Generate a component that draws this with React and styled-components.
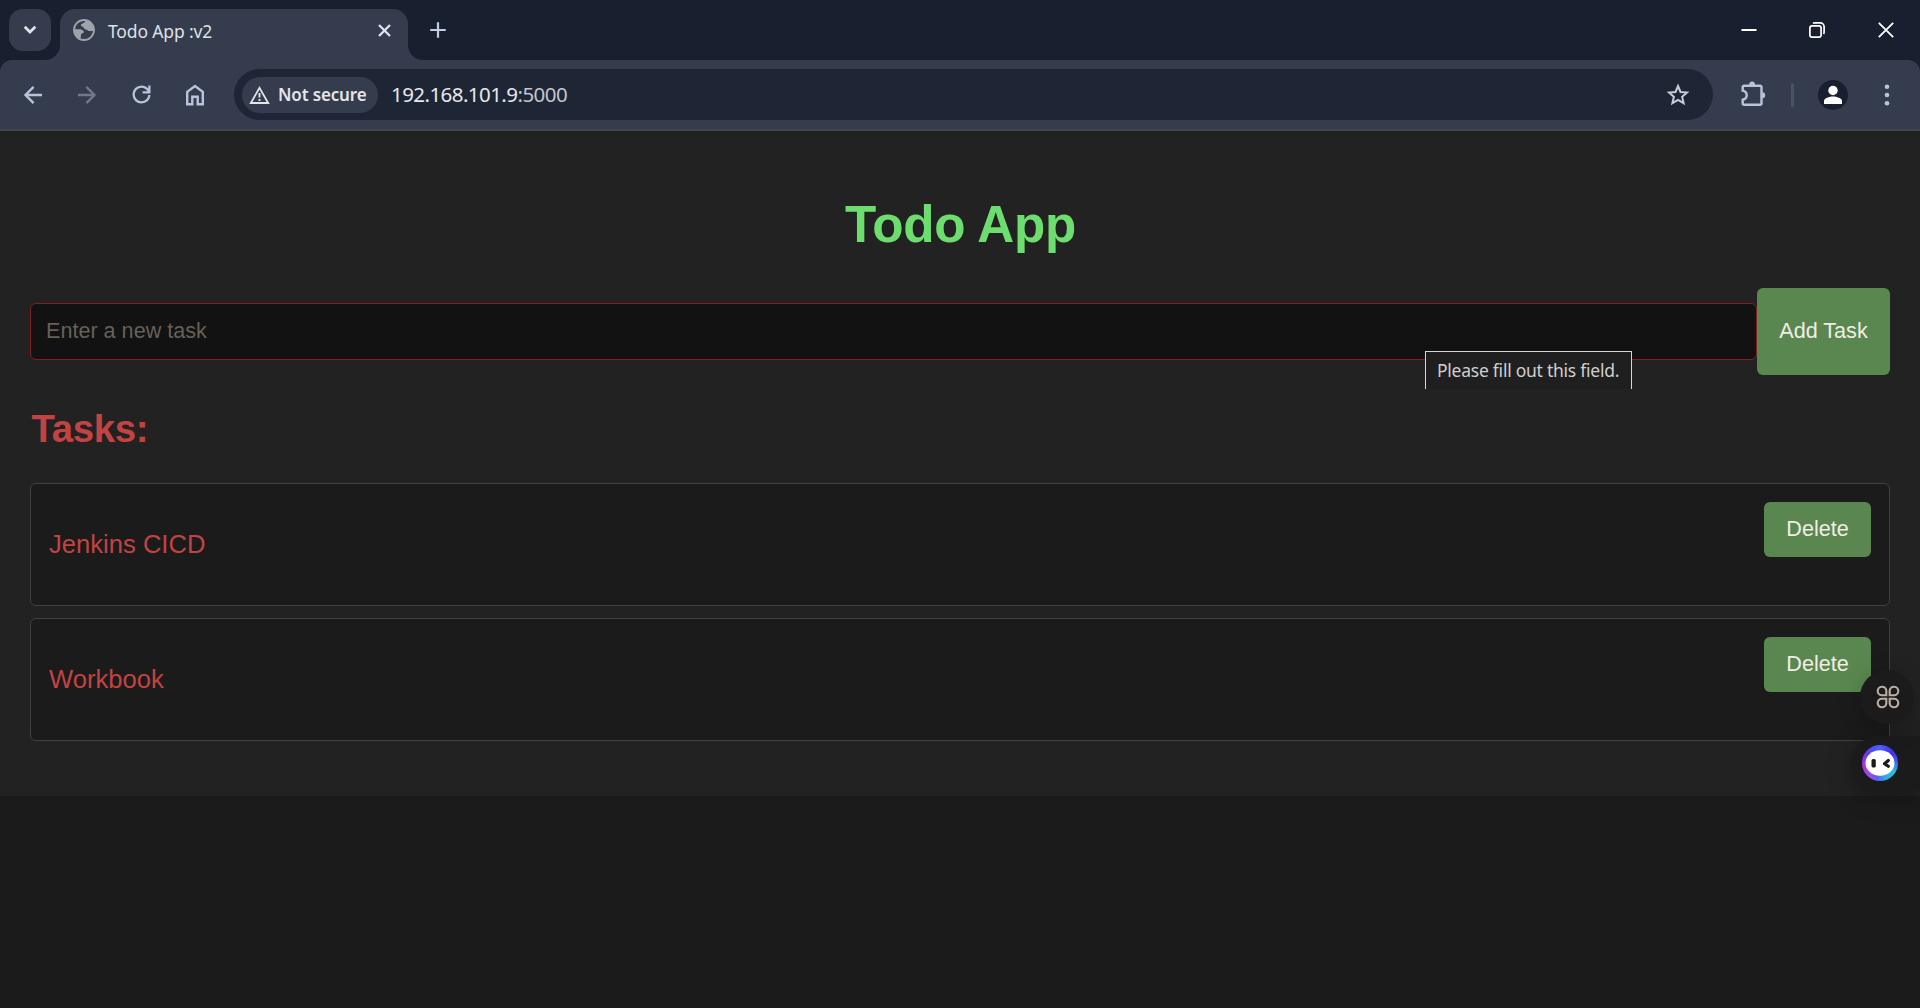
import React from "react";
import styled, { createGlobalStyle } from "styled-components";

const Global = createGlobalStyle`
  * { box-sizing: border-box; }
  html, body { margin: 0; padding: 0; background: #1b1b1b; }
  body { height: 1008px; overflow: hidden; font-family: "Liberation Sans", Arial, sans-serif; }
  svg { display: block; flex: none; }
`;

const ui = `"Noto Sans", "Open Sans", sans-serif`;

const Window = styled.div`
  position: relative;
  width: 1920px;
  height: 1008px;
  display: flex;
  flex-direction: column;
  overflow: hidden;
`;

const TabStrip = styled.header`
  height: 60px;
  flex: none;
  display: flex;
  align-items: flex-start;
  padding: 9px 0 0 9px;
  background: #182030;
`;

const TabSearch = styled.button`
  width: 42px;
  height: 42px;
  padding: 0;
  border: 0;
  border-radius: 14px;
  background: #343c4d;
  display: grid;
  place-items: center;
`;

const Tab = styled.div`
  position: relative;
  width: 348px;
  height: 51px;
  margin-left: 9px;
  padding: 0 17px 9px 13px;
  border-radius: 15px 15px 0 0;
  background: #343c4d;
  display: flex;
  align-items: center;
  &::before, &::after {
    content: "";
    position: absolute;
    bottom: 0;
    width: 15px;
    height: 15px;
  }
  &::before { left: -15px; background: radial-gradient(circle at 0 0, transparent 14.5px, #343c4d 15.5px); }
  &::after { right: -15px; background: radial-gradient(circle at 100% 0, transparent 14.5px, #343c4d 15.5px); }
`;

const TabTitle = styled.span`
  flex: 1;
  margin-left: 13px;
  padding-top: 2px;
  color: #dfe1e6;
  font: 17.5px/24px ${ui};
  letter-spacing: -0.15px;
`;

const NewTab = styled.span`
  margin: 13px 0 0 22px;
`;

const Captions = styled.div`
  margin-left: auto;
  display: flex;
  height: 41px;
  align-items: center;
`;

const Caption = styled.span`
  width: 68.5px;
  display: grid;
  place-items: center;
`;

const ToolbarBack = styled.div`
  flex: none;
  background: #182030;
`;

const Toolbar = styled.nav`
  height: 71px;
  border-bottom: 2px solid #44474f;
  border-radius: 12px 12px 0 0;
  background: #343c4d;
  display: flex;
  align-items: center;
  padding: 0 18px;
`;

const NavIcons = styled.div`
  display: flex;
  gap: 24px;
`;

const Omnibox = styled.div`
  width: 1479px;
  height: 51px;
  margin-left: 24px;
  border-radius: 26px;
  background: #1e2636;
  display: flex;
  align-items: center;
  padding: 0 22px 0 8px;
`;

const SecurityChip = styled.div`
  width: 136px;
  height: 36px;
  border-radius: 18px;
  background: #343c4d;
  display: flex;
  align-items: center;
  padding-left: 7px;
  gap: 8px;
  color: #e3e5ea;
  font: 600 17px/24px ${ui};
  letter-spacing: -0.15px;
  white-space: nowrap;
`;

const Url = styled.span`
  flex: 1;
  margin: -2px 0 0 13px;
  color: #e6e8ed;
  font: 20.5px/28px ${ui};
  letter-spacing: -0.56px;
`;

const Port = styled.span`
  color: #c2c5cd;
`;

const Actions = styled.div`
  display: flex;
  align-items: center;
  padding-left: 25px;
`;

const Divider = styled.span`
  width: 3px;
  height: 24px;
  margin: 0 24px 0 23px;
  border-radius: 2px;
  background: #4a5265;
`;

const Avatar = styled.span`
  width: 30px;
  height: 30px;
  margin-right: 27px;
  border-radius: 50%;
  background: #182030;
  display: grid;
  place-items: center;
`;

const Page = styled.main`
  height: 665px;
  flex: none;
  background: #222222;
  padding: 64px 30px 0;
`;

const Title = styled.h1`
  margin: 0;
  height: 60px;
  padding-left: 1px;
  text-align: center;
  color: #6edd70;
  font-size: 51.2px;
  line-height: 60px;
  letter-spacing: -0.25px;
`;

const TaskForm = styled.form`
  position: relative;
  display: flex;
  align-items: center;
  margin-top: 33px;
  height: 87px;
`;

const TaskInput = styled.input`
  flex: 1;
  height: 57px;
  padding: 0 15px 1px;
  border: 1px solid #831e1e;
  border-radius: 6px;
  background: #121212;
  color: #e8e6e3;
  font: 21.6px "Liberation Sans", Arial, sans-serif;
  outline: none;
  &::placeholder { color: #656158; opacity: 1; }
`;

const Button = styled.button`
  width: ${(p) => (p.$large ? 133 : 107)}px;
  height: ${(p) => (p.$large ? 87 : 55)}px;
  padding: 0 0 1px;
  border: 0;
  border-radius: 6px;
  background: #5a8750;
  color: #f0ede4;
  font: 21.6px "Liberation Sans", Arial, sans-serif;
  white-space: nowrap;
`;

const Hint = styled.div`
  position: absolute;
  left: 1395px;
  top: 63px;
  width: 207px;
  height: 38px;
  padding-left: 11px;
  border: 1px solid #d6d6d6;
  border-bottom: 0;
  background: #1f1f1f;
  color: #cfcfcf;
  font: 17.5px/36px ${ui};
  letter-spacing: -0.25px;
  white-space: nowrap;
`;

const Subtitle = styled.h2`
  margin: 32px 0 0 1.5px;
  height: 44px;
  color: #c24342;
  font-size: 38.4px;
  line-height: 44px;
  letter-spacing: -0.35px;
`;

const TaskList = styled.ul`
  list-style: none;
  margin: 32px 0 0;
  padding: 0;
  display: flex;
  flex-direction: column;
  gap: 12px;
`;

const Task = styled.li`
  height: 123px;
  padding: 18px;
  border: 1px solid #414141;
  border-radius: 6px;
  background: #1b1b1b;
  display: flex;
  justify-content: space-between;
`;

const TaskName = styled.span`
  margin-top: 27px;
  color: #c24342;
  font-size: 25.6px;
  line-height: 30px;
`;

const Shortcuts = styled.div`
  position: absolute;
  left: 1860px;
  top: 670px;
  width: 54px;
  height: 54px;
  padding: 0 0 1px 1px;
  border-radius: 50%;
  background: #1b1b1b;
  box-shadow: 0 6px 24px rgba(0, 0, 0, 0.22);
  display: grid;
  place-items: center;
`;

const Assistant = styled.div`
  position: absolute;
  left: 1851px;
  top: 736px;
  width: 69px;
  height: 54px;
  padding-left: 11px;
  border-radius: 27px 0 0 27px;
  background: #1b1b1b;
  box-shadow: 0 6px 24px rgba(0, 0, 0, 0.35);
  display: flex;
  align-items: center;
`;

const AssistantRing = styled.span`
  width: 36px;
  height: 36px;
  border-radius: 50%;
  background: conic-gradient(#4b63ff, #4a2cf0 50deg, #3f5cf0 85deg, #22c4da 120deg, #30a8e6 160deg, #5a62ee 190deg, #9a48ee 220deg, #a734dc 265deg, #5b3cf0 310deg, #4b63ff);
  display: grid;
  place-items: center;
`;

const ReloadSlot = styled.span`
  width: 30px;
  height: 30px;
  display: grid;
  place-items: center;
`;

const stroke = { fill: "none", stroke: "#bac3dc", strokeWidth: 2.4 };

const Globe = () => (
  <svg width="22" height="22" viewBox="0 0 22 22">
    <circle cx="11" cy="11" r="10" fill="#343c4d" stroke="#9ea4ab" strokeWidth="1.8" />
    <path fill="#9ea4ab" d="M12 1.200c.2 1.300-.3 2.300-1.300 2.800-1.600.7-2.900 1-2.700 2.600.2 1.600 2.200.7 2.600 2 .3 1.200 1.200 1.900 2.300 1.900 1.500 0 1.700 1.600 3.200 1.600h4.700A10 10 0 0 0 12 1.200ZM1.200 10.300h4.600c2.200 0 3.700.4 4.900 2 .8 1.200-.5 2.100-1.700 2.300-1.300.2-.9 1.400-1 2.500-.1 1-.6 1.700-.6 2.900A10 10 0 0 1 1.200 10.300Z" />
  </svg>
);

const tasks = ["Jenkins CICD", "Workbook"];

export default function App() {
  return (
    <>
      <Global />
      <Window>
        <TabStrip>
          <TabSearch aria-label="Search tabs">
            <svg width="14" height="10" viewBox="0 0 14 10"><path d="M1.700 1.700 7 7l5.300-5.300" fill="none" stroke="#e0e3ea" strokeWidth="2.700" /></svg>
          </TabSearch>
          <Tab>
            <Globe />
            <TabTitle>Todo App :v2</TabTitle>
            <svg width="13" height="13" viewBox="0 0 13 13"><path d="m1 1 11 11M12 1 1 12" stroke="#e0e3ea" strokeWidth="2.300" /></svg>
          </Tab>
          <NewTab>
            <svg width="16" height="16" viewBox="0 0 16 16"><path d="M8 .2v15.600M.2 8h15.600" stroke="#c4cce4" strokeWidth="2.200" /></svg>
          </NewTab>
          <Captions>
            <Caption><svg width="16" height="16" viewBox="0 0 16 16"><path d="M.5 8h15" stroke="#fff" strokeWidth="2" /></svg></Caption>
            <Caption>
              <svg width="16" height="16" viewBox="0 0 16 16" fill="none" stroke="#fff" strokeWidth="1.700">
                <rect x=".9" y="3.900" width="11.200" height="11.200" rx="2.200" />
                <path d="M4 1.300C4.500.9 5.200.9 6 .9h5.300a3.800 3.800 0 0 1 3.800 3.800V10c0 .8 0 1.400-.6 2" />
              </svg>
            </Caption>
            <Caption><svg width="16" height="16" viewBox="0 0 16 16"><path d="m.8.8 14.400 14.400M15.200.8.8 15.200" stroke="#fff" strokeWidth="1.800" /></svg></Caption>
          </Captions>
        </TabStrip>
        <ToolbarBack>
          <Toolbar>
            <NavIcons>
              <svg width="30" height="30" viewBox="0 0 30 30" {...stroke}><path d="M24 15H8M15.600 6.900 7.500 15l8.100 8.100" /></svg>
              <svg width="30" height="30" viewBox="0 0 30 30" {...stroke} stroke="#717889"><path d="M6 15h16M14.400 6.900l8.100 8.100-8.100 8.100" /></svg>
              <ReloadSlot>
                <svg width="27" height="27" viewBox="0 0 24 24" fill="#bac3dc"><path d="M12 20q-3.350 0-5.675-2.325T4 12t2.325-5.675T12 4q1.725 0 3.300.713T18 6.750V4h2v7h-7V9h4.200q-.8-1.400-2.187-2.200T12 6Q9.500 6 7.750 7.750T6 12t1.750 4.250T12 18q2.500 0 4.250-1.750T18 12.500h2q0 3.200-2.325 5.350T12 20Z" /></svg>
              </ReloadSlot>
              <svg width="30" height="30" viewBox="0 0 30 30" {...stroke}><path d="M7.200 11.900 15 6l7.800 5.900v12.400h-5.100v-7.500h-5.400v7.500H7.200Z" /></svg>
            </NavIcons>
            <Omnibox>
              <SecurityChip>
                <svg width="21" height="18" viewBox="0 0 21 18"><path d="M10.500 1.900 19.200 17H1.800Z" fill="none" stroke="#e3e5ea" strokeWidth="1.800" /><path d="M10.500 7v4.500M10.500 13v2" stroke="#e3e5ea" strokeWidth="1.900" /></svg>
                Not secure
              </SecurityChip>
              <Url>192.168.101.9<Port>:5000</Port></Url>
              <svg width="26" height="26" viewBox="0 0 26 26"><path d="m13 4 2.500 6 6.500.6-4.900 4.200 1.500 6.300-5.600-3.300-5.600 3.300 1.500-6.300L4 10.600l6.500-.6Z" fill="none" stroke="#c9ccd3" strokeWidth="2" /></svg>
            </Omnibox>
            <Actions>
              <svg width="30" height="30" viewBox="0 0 30 30" {...stroke}>
                <path d="M6.200 5.700H22a1.500 1.500 0 0 1 1.500 1.500v16a1.500 1.500 0 0 1-1.500 1.500H6.200a1.500 1.500 0 0 1-1.500-1.500v-3.500c2.700-.6 4-2.300 4-4.500s-1.300-3.900-4-4.500V7.200a1.500 1.500 0 0 1 1.500-1.500Z" />
                <path d="M11.200 5a2.900 3.400 0 0 1 5.800 0ZM24.200 12.200a3 3 0 0 1 0 6Z" fill="#bac3dc" stroke="none" />
              </svg>
              <Divider />
              <Avatar>
                <svg width="20" height="20" viewBox="0 0 20 20" fill="#fff"><circle cx="10" cy="5.500" r="4.700" /><path d="M1 19v-3c0-3 5.500-4.500 9-4.500s9 1.500 9 4.500v3Z" /></svg>
              </Avatar>
              <svg width="24" height="24" viewBox="0 0 24 24" fill="#bac3dc"><circle cx="12" cy="3.700" r="2.300" /><circle cx="12" cy="12" r="2.300" /><circle cx="12" cy="20.300" r="2.300" /></svg>
            </Actions>
          </Toolbar>
        </ToolbarBack>
        <Page>
          <Title>Todo App</Title>
          <TaskForm>
            <TaskInput placeholder="Enter a new task" />
            <Button $large type="button">Add Task</Button>
            <Hint>Please fill out this field.</Hint>
          </TaskForm>
          <Subtitle>Tasks:</Subtitle>
          <TaskList>
            {tasks.map((name) => (
              <Task key={name}>
                <TaskName>{name}</TaskName>
                <Button type="button">Delete</Button>
              </Task>
            ))}
          </TaskList>
        </Page>
        <Assistant>
          <AssistantRing>
            <svg width="30" height="26" viewBox="0 0 30 26">
              <ellipse cx="15" cy="13" rx="14.500" ry="12.700" fill="#fff" />
              <rect x="6.500" y="9" width="4.300" height="8.500" rx="1.600" fill="#1b1b1b" />
              <path d="M23.300 10.500 19.500 13.700l3.800 2.600" fill="none" stroke="#1b1b1b" strokeWidth="3.200" strokeLinecap="round" strokeLinejoin="round" />
            </svg>
          </AssistantRing>
        </Assistant>
        <Shortcuts>
          <svg width="24" height="24" viewBox="0 0 24 24" fill="none" stroke="#b9b0a2" strokeWidth="2.100">
            <path d="M10.300 10.300H5.600a4.300 4.300 0 1 1 4.700-4.700ZM13.700 10.300V5.600a4.300 4.300 0 1 1 4.700 4.700ZM10.300 13.700v4.700a4.300 4.300 0 1 1-4.700-4.700ZM13.700 13.700h4.700a4.300 4.300 0 1 1-4.700 4.700Z" />
          </svg>
        </Shortcuts>
      </Window>
    </>
  );
}
